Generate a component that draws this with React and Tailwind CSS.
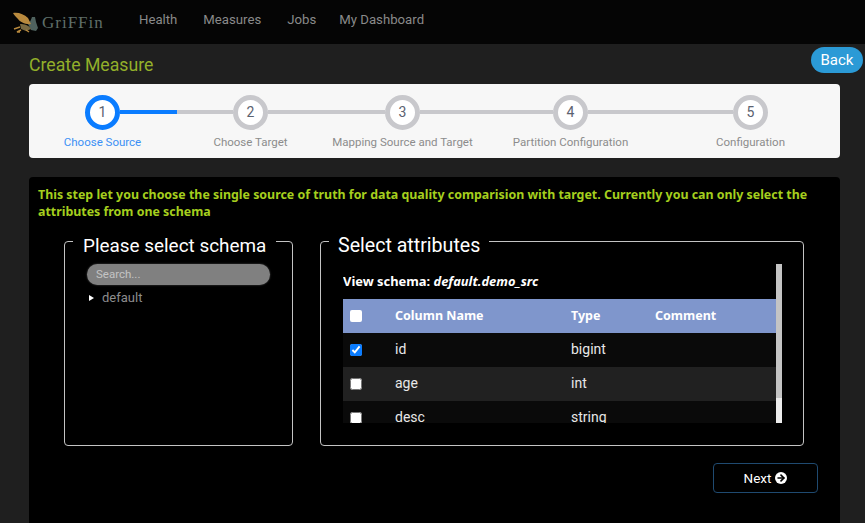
import React from "react";
import { ArrowRight } from "lucide-react";

function Step({ n, label, active }) {
  return (
    <div className="flex w-[35px] shrink-0 flex-col items-center">
      <div className={"flex h-[35px] w-[35px] items-center justify-center rounded-full border-[5px] bg-white text-[14px] text-[#5b6270] " + (active ? "border-[#0a7cff]" : "border-[#c8c8cc]")}>{n}</div>
      <div className={"mt-[4px] whitespace-nowrap text-[11.5px] leading-[16px] " + (active ? "text-[#3b90f5]" : "text-[#8c8c8c]")}>{label}</div>
    </div>
  );
}

function Line({ w, children }) {
  return <div className={"mt-[15px] h-[4px] shrink-0 bg-[#c8c8cc] " + w}>{children}</div>;
}

function Griffin() {
  return (
    <svg width="27" height="21" viewBox="0 0 27 21" className="shrink-0">
      <path d="M16 12 C18 10 19 8 20 5 L23 5 L24 10 L26 16 L24 19 L19 18Z" fill="#4f625e" />
      <path d="M8 12 C12 12 17 13 19 17 L14 19 L9 17Z" fill="#7a6a42" />
      <path d="M1 1 C6 0 12 2 16 6 L19 12 C14 13 8 10 6 7 C4 5 2 3 1 1Z" fill="#b98a3e" />
      <path d="M8 15 L2 17 M9 18 L5 20 L8 20 M14 18 L17 20" stroke="#b98a3e" strokeWidth="1.5" fill="none" />
    </svg>
  );
}

const rows = [
  { name: "id", type: "bigint", checked: true, bg: "bg-[#0a0a0a]" },
  { name: "age", type: "int", bg: "bg-[#212121]" },
  { name: "desc", type: "string", bg: "bg-[#0a0a0a]" },
];

export default function App() {
  return (
    <div className="flex h-[523px] w-[865px] flex-col overflow-hidden bg-[#1f1f1f] font-['Roboto','Noto_Sans',sans-serif]">
      <nav className="flex h-[44px] shrink-0 items-center bg-[#050505]">
        <div className="ml-[12px] flex w-[127px] shrink-0 items-center">
          <Griffin />
          <span className="ml-[3px] font-['Liberation_Serif',serif] text-[17px] leading-none tracking-[1px] text-[#5f6f69]">GriFFin</span>
        </div>
        <div className="mt-[-4px] flex gap-[26px] text-[13.2px] text-[#8a8a8a]">
          <span>Health</span>
          <span>Measures</span>
          <span className="w-[26px]">Jobs</span>
          <span>My Dashboard</span>
        </div>
      </nav>

      <div className="relative flex flex-1 flex-col pl-[29px] pr-[25px]">
        <div className="absolute right-[2px] top-[3px] flex h-[26px] w-[52px] items-center justify-center rounded-full bg-[#2b9ad6] text-[15px] text-white">Back</div>
        <h1 className="mt-[8px] text-[17.7px] font-normal leading-[26px] text-[#93b02a]">Create Measure</h1>

        <div className="mt-[6px] flex h-[74px] w-[811px] shrink-0 rounded-[4px] bg-[#f7f7f7] pl-[56px] pt-[11px]">
          <Step n="1" label="Choose Source" active />
          <Line w="w-[113px]"><div className="h-full w-[57px] bg-[#0a7cff]" /></Line>
          <Step n="2" label="Choose Target" />
          <Line w="w-[117px]" />
          <Step n="3" label="Mapping Source and Target" />
          <Line w="w-[133px]" />
          <Step n="4" label="Partition Configuration" />
          <Line w="w-[145px]" />
          <Step n="5" label="Configuration" />
        </div>

        <main className="mt-[19px] flex w-[811px] flex-1 flex-col rounded-t-[4px] bg-black">
          <p className="px-[9px] pt-[9px] font-['Noto_Sans',sans-serif] text-[12.4px] font-bold leading-[17px] text-[#a5cf1e]">
            This step let you choose the single source of truth for data quality comparision with target. Currently you can only select the attributes from one schema
          </p>

          <div className="mt-[5px] flex items-start pl-[35px]">
            <fieldset className="h-[221px] w-[229px] shrink-0 rounded-[4px] border border-[#c4c4c4] pl-[22px]">
              <legend className="ml-[-14px] whitespace-nowrap px-[10px] pt-[8px] text-[18.9px] leading-[25px] text-white">Please select schema</legend>
              <div className="mt-[6px] flex h-[21px] w-[183px] items-center rounded-full bg-[#808080] pl-[9px] text-[11.5px] text-[#c4c4c4] shadow-[0_0_2px_#555]">Search...</div>
              <div className="mt-[4px] flex items-center pl-[2px] text-[13px] leading-[18px] text-[#8c8c8c]">
                <span className="mr-[8px] h-0 w-0 border-y-[3px] border-l-[5px] border-y-transparent border-l-white" />
                default
              </div>
            </fieldset>

            <fieldset className="ml-[27px] h-[221px] w-[484px] shrink-0 rounded-[4px] border border-[#c4c4c4] pl-[21px]">
              <legend className="ml-[-13px] whitespace-nowrap px-[9px] pt-[8px] text-[19.6px] leading-[25px] text-white">Select attributes</legend>
              <div className="mt-[6px] flex h-[159px] w-[439px]">
                <div className="ml-[1px] w-[433px] shrink-0 overflow-hidden">
                  <div className="flex h-[35px] items-center font-['Noto_Sans',sans-serif] text-[12.9px] font-bold text-white">
                    View schema:&nbsp;<i>default.demo_src</i>
                  </div>
                  <div className="flex h-[34px] items-center bg-[#7f96cc] font-['Noto_Sans',sans-serif] text-[12.5px] font-bold text-white">
                    <div className="flex w-[52px] pl-[7px]">
                      <input type="checkbox" readOnly className="h-[12px] w-[12px] appearance-none rounded-[2px] bg-white" />
                    </div>
                    <div className="w-[176px]">Column Name</div>
                    <div className="w-[84px]">Type</div>
                    <div>Comment</div>
                  </div>
                  {rows.map((r) => (
                    <div key={r.name} className={"flex h-[34px] shrink-0 items-center pb-[1px] text-[14px] text-[#e8e8e8] " + r.bg}>
                      <div className="flex w-[52px] pl-[7px]">
                        <input type="checkbox" readOnly checked={!!r.checked} className="h-[12px] w-[12px] accent-[#0a7cff]" />
                      </div>
                      <div className="w-[176px]">{r.name}</div>
                      <div>{r.type}</div>
                    </div>
                  ))}
                </div>
                <div className="h-full w-[6px] shrink-0 bg-[#ececec]">
                  <div className="h-[134px] w-full bg-[#c4c4c4]" />
                </div>
              </div>
            </fieldset>
          </div>

          <div className="mt-[17px] flex justify-end pr-[22px]">
            <div className="flex h-[30px] w-[105px] items-center justify-center gap-[4px] rounded-[4px] border border-[#1f4a70] text-[13.5px] text-white">
              Next
              <span className="flex h-[12px] w-[12px] items-center justify-center rounded-full bg-white">
                <ArrowRight size={10} strokeWidth={4} color="#000" />
              </span>
            </div>
          </div>
        </main>
      </div>
    </div>
  );
}
